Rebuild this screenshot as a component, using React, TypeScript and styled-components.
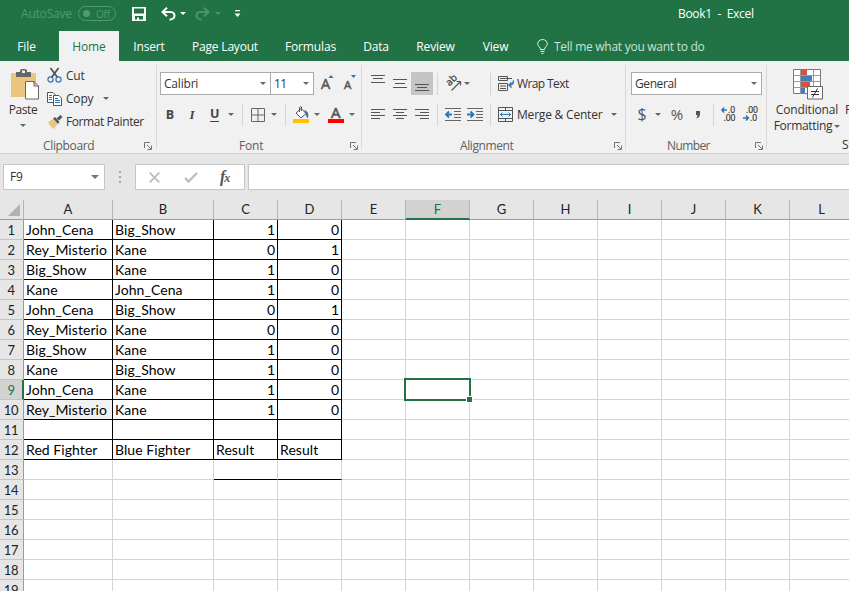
import React from 'react';
import styled, { createGlobalStyle, css } from 'styled-components';

const GREEN = '#217346';
const UI = "'Open Sans', 'Noto Sans', sans-serif";

const Global = createGlobalStyle`
  *, *::before, *::after { box-sizing: border-box; }
  body { margin: 0; overflow: hidden; background: #e6e6e6; font-family: ${UI}; }
`;

const Window = styled.div`
  width: 849px;
  height: 591px;
  overflow: hidden;
  display: flex;
  flex-direction: column;
  font-size: 12px;
  color: #333;
  background: #e6e6e6;
`;

/* Label with a fixed advance so neighbouring controls stay aligned */
const Label = styled.span<{ $w?: number; $ml?: number; $ls?: number; $size?: number }>`
  flex: none;
  white-space: nowrap;
  width: ${p => (p.$w ? `${p.$w}px` : 'auto')};
  margin-left: ${p => p.$ml ?? 0}px;
  letter-spacing: ${p => p.$ls ?? 0}px;
  font-size: ${p => p.$size ?? 12}px;
  line-height: 16px;
`;

const Icon = styled.svg<{ $ml?: number }>`
  flex: none;
  display: block;
  overflow: visible;
  margin-left: ${p => p.$ml ?? 0}px;
`;

const Arrow = styled.i<{ $ml?: number; $color?: string; $size?: number }>`
  flex: none;
  width: 0;
  height: 0;
  margin-left: ${p => p.$ml ?? 0}px;
  border: ${p => p.$size ?? 3}px solid transparent;
  border-top-color: ${p => p.$color ?? '#666'};
  border-bottom: 0;
`;

/* ---------- title bar ---------- */
const TitleBar = styled.header`
  flex: none;
  height: 31px;
  display: flex;
  align-items: center;
  padding: 0 0 4px 21px;
  background: ${GREEN};
  color: #fff;
`;
const AutoSave = styled(Label)` color: #4f9a70; `;
const Toggle = styled.span`
  flex: none;
  display: flex;
  align-items: center;
  width: 38px;
  height: 15px;
  margin-left: 7px;
  padding-left: 4px;
  border: 1px solid #4f9a70;
  border-radius: 8px;
  color: #4f9a70;
  &::before {
    content: '';
    width: 7px;
    height: 7px;
    border-radius: 50%;
    background: #4f9a70;
  }
`;

/* ---------- tabs ---------- */
const Tabs = styled.nav`
  flex: none;
  height: 30px;
  display: flex;
  align-items: center;
  background: ${GREEN};
  color: #fff;
`;
const Tab = styled.span<{ $w: number; $active?: boolean; $ls?: number }>`
  flex: none;
  width: ${p => p.$w}px;
  height: 30px;
  line-height: 31px;
  text-align: center;
  white-space: nowrap;
  letter-spacing: ${p => p.$ls ?? -0.15}px;
  ${p => p.$active && css`
    background: #f1f1f1;
    color: ${GREEN};
  `}
`;
const Tell = styled(Label)` color: #c9e3d4; padding-top: 1px; `;

/* ---------- ribbon ---------- */
const Ribbon = styled.div`
  flex: none;
  height: 93px;
  display: flex;
  background: #f1f1f1;
  border-bottom: 1px solid #d2d2d2;
`;
const Group = styled.section<{ $w: number }>`
  flex: none;
  width: ${p => p.$w}px;
  height: 92px;
  display: flex;
  flex-direction: column;
  background: linear-gradient(#d8d8d8, #d8d8d8) no-repeat right 4px / 1px 84px;
`;
const Tools = styled.div`
  height: 76px;
  padding-top: 11px;
  display: flex;
  flex-direction: column;
  gap: 8px;
`;
const Row = styled.div<{ $h?: number; $pl?: number }>`
  flex: none;
  height: ${p => p.$h ?? 23}px;
  padding-left: ${p => p.$pl ?? 0}px;
  display: flex;
  align-items: center;
`;
const Footer = styled.div<{ $pl: number; $pr?: number }>`
  height: 16px;
  display: flex;
  align-items: center;
  padding: 1px ${p => p.$pr ?? 4}px 0 ${p => p.$pl}px;
  color: #5e5e5e;
  & > svg { margin-left: auto; }
`;
const Divider = styled.i<{ $ml: number }>`
  flex: none;
  width: 1px;
  height: 22px;
  margin-left: ${p => p.$ml}px;
  background: #d4d4d4;
`;
const Combo = styled.div<{ $w: number; $joined?: boolean }>`
  flex: none;
  width: ${p => p.$w}px;
  height: 23px;
  margin-left: ${p => (p.$joined ? -1 : 0)}px;
  padding: 0 4px 0 3px;
  display: flex;
  align-items: center;
  justify-content: space-between;
  background: #fff;
  border: 1px solid #ababab;
`;
const Clip = styled.div`
  display: flex;
  height: 76px;
`;
const Big = styled.div<{ $w: number }>`
  flex: none;
  width: ${p => p.$w}px;
  height: 76px;
  padding-top: 8px;
  display: flex;
  flex-direction: column;
  align-items: center;
  & > svg { margin-bottom: 2px; }
`;
const Styles = styled.div`
  flex: none;
  width: 20px;
  margin-left: -5px;
  padding: 41px 0 0;
  display: flex;
  flex-direction: column;
  gap: 19px;
`;
const Stack = styled.div`
  display: flex;
  flex-direction: column;
  padding-top: 3px;
`;
const Letter = styled.b<{ $w: number; $ml: number; $italic?: boolean; $under?: boolean }>`
  flex: none;
  width: ${p => p.$w}px;
  margin-left: ${p => p.$ml}px;
  text-align: center;
  font-size: 12.5px;
  line-height: 14px;
  color: #444;
  ${p => p.$italic && css`
    font: italic bold 13px/14px 'Liberation Serif', serif;
  `}
  ${p => p.$under && css`
    height: 15px;
    border-bottom: 1px solid #444;
  `}
`;
const Pressed = styled.span`
  flex: none;
  width: 22px;
  height: 23px;
  margin-left: 4px;
  display: flex;
  align-items: center;
  justify-content: center;
  background: #c5c5c5;
`;
const Symbol = styled.span<{ $w: number; $ml: number; $size?: number }>`
  flex: none;
  width: ${p => p.$w}px;
  margin-left: ${p => p.$ml}px;
  font-size: ${p => p.$size ?? 16}px;
  line-height: 20px;
  height: 22px;
  text-align: center;
  color: #555;
`;

const Launcher = () => (
  <Icon width="8" height="8" viewBox="0 0 8 8" fill="none" stroke="#777">
    <path d="M.5 6V.5H6M3 3l4 4M7.500 3.500v4h-4" />
  </Icon>
);

const Lines = ({ rows, ml = 0, h = 15 }: { rows: number[][]; ml?: number; h?: number }) => (
  <Icon $ml={ml} width="14" height={h} viewBox={`0 0 14 ${h}`} stroke="#555">
    {rows.map(([y, a, b]) => <path key={y} d={`M${a} ${y + 0.5}H${b}`} />)}
  </Icon>
);

const Indent = ({ ml, right }: { ml: number; right?: boolean }) => (
  <Icon $ml={ml} width="16" height="15" viewBox="0 0 16 15" fill="none" stroke="#666">
    <path d="M0 1.500H16M9 4.500h7M9 7.500h7M9 10.500h7M0 13.500H16" />
    <path d={right ? 'M0 7.500h6M3.500 4.500L6.500 7.500 3.500 10.500' : 'M1 7.500h6M4 4.500L1 7.500l3 3'} stroke="#2e75b6" strokeWidth="1.800" />
  </Icon>
);

const Decimals = ({ ml, more }: { ml: number; more?: boolean }) => (
  <Icon $ml={ml} width="16" height="17" viewBox="0 0 16 17" fontSize="8.500" fontFamily="Open Sans" fill="#333">
    <text x={more ? 7 : 3} y="7" stroke="#333" strokeWidth=".2">{more ? '.0' : '.00'}</text>
    <text x={more ? 2.5 : 7} y="15" stroke="#333" strokeWidth=".2">{more ? '.00' : '.0'}</text>
    <path d={more ? 'M1 4h5M3.200 1.500L.8 4 3.200 6.500' : 'M0 12h5M3 9.500L5.400 12 3 14.500'} stroke="#2e75b6" strokeWidth="1.400" fill="none" />
  </Icon>
);

/* ---------- formula bar ---------- */
const FormulaBar = styled.div`
  flex: none;
  height: 46px;
  display: flex;
  align-items: flex-start;
  padding: 10px 0 0 3px;
`;
const Box = styled.div<{ $w: number; $ml?: number }>`
  flex: none;
  width: ${p => p.$w}px;
  height: 26px;
  margin-left: ${p => p.$ml ?? 0}px;
  display: flex;
  align-items: center;
  background: #fff;
  border: 1px solid #c6c6c6;
`;
const NameBox = styled(Box)`
  justify-content: space-between;
  padding: 0 5px 0 6px;
`;
const Dots = styled.span`
  flex: none;
  width: 2px;
  margin: 7px 0 0 14px;
  display: flex;
  flex-direction: column;
  gap: 3px;
  & > i { height: 2px; background: #a8a8a8; }
`;
const Fx = styled.span`
  margin-left: 22px;
  font: italic bold 16px/20px 'Liberation Serif', serif;
  color: #555;
  & > small { font-size: 12px; margin-left: -1px; }
`;

/* ---------- sheet ---------- */
const Sheet = styled.div`
  flex: none;
  display: grid;
  grid-template-columns: 24px 89px 101px repeat(10, 64px);
  grid-template-rows: 20px;
  grid-auto-rows: 20px;
  background: #fff;
`;
const Corner = styled.div`
  display: flex;
  align-items: flex-end;
  justify-content: flex-end;
  padding: 0 3px 3px 0;
  background: #e6e6e6;
  border-right: 1px solid #b5b5b5;
  border-bottom: 1px solid #9b9b9b;
`;
const ColHead = styled.div<{ $on?: boolean }>`
  height: 20px;
  text-align: center;
  font: 13px/19px Lato, ${UI};
  color: ${p => (p.$on ? GREEN : '#222')};
  background: ${p => (p.$on ? '#d2d2d2' : '#e6e6e6')};
  border-right: 1px solid #b5b5b5;
  border-bottom: ${p => (p.$on ? `2px solid ${GREEN}` : '1px solid #9b9b9b')};
`;
const RowHead = styled.div<{ $on?: boolean }>`
  text-align: center;
  font: 13px/21px Lato, ${UI};
  letter-spacing: -0.4px;
  height: 20px;
  padding-right: ${p => (p.$on ? 0 : 1)}px;
  color: ${p => (p.$on ? GREEN : '#222')};
  background: ${p => (p.$on ? '#d2d2d2' : '#e6e6e6')};
  border-right: ${p => (p.$on ? `2px solid ${GREEN}` : '1px solid #9b9b9b')};
  border-bottom: 1px solid #c4c4c4;
`;
const Cell = styled.div<{ $right?: boolean; $boxed?: boolean; $under?: boolean; $shade?: boolean }>`
  position: relative;
  height: 20px;
  padding: 0 2px;
  font-family: Lato, 'Open Sans', sans-serif;
  font-size: 14px;
  line-height: 20px;
  letter-spacing: ${p => (p.$right ? 0 : 0.06)}px;
  color: #000;
  white-space: nowrap;
  background: ${p => (p.$shade ? '#f1f1f1' : 'transparent')};
  text-align: ${p => (p.$right ? 'right' : 'left')};
  border-right: 1px solid ${p => (p.$boxed ? '#000' : '#d4d4d4')};
  border-bottom: 1px solid ${p => (p.$boxed || p.$under ? '#000' : '#d4d4d4')};
`;
const Selection = styled.div`
  position: absolute;
  z-index: 1;
  left: -2px;
  top: -2px;
  width: 67px;
  height: 23px;
  border: 2px solid ${GREEN};
  &::after {
    content: '';
    position: absolute;
    right: -4px;
    bottom: -4px;
    width: 7px;
    height: 7px;
    background: ${GREEN};
    border: 1px solid #fff;
  }
`;

const COLS = 'ABCDEFGHIJKL'.split('');
const DATA: string[][] = [
  ['John_Cena', 'Big_Show', '1', '0'],
  ['Rey_Misterio', 'Kane', '0', '1'],
  ['Big_Show', 'Kane', '1', '0'],
  ['Kane', 'John_Cena', '1', '0'],
  ['John_Cena', 'Big_Show', '0', '1'],
  ['Rey_Misterio', 'Kane', '0', '0'],
  ['Big_Show', 'Kane', '1', '0'],
  ['Kane', 'Big_Show', '1', '0'],
  ['John_Cena', 'Kane', '1', '0'],
  ['Rey_Misterio', 'Kane', '1', '0'],
  [],
  ['Red Fighter', 'Blue Fighter', 'Result', 'Result'],
];

export default function App() {
  return (
    <Window>
      <Global />
      <TitleBar>
        <AutoSave $w={50} $ls={-0.2}>AutoSave</AutoSave>
        <Toggle><Label $ml={6} $size={10} $ls={-0.2}>Off</Label></Toggle>
        <Icon $ml={16} width="14" height="14" viewBox="0 0 14 14">
          <path fill="#fff" fillRule="evenodd" d="M0 0H14V14H0ZM2 1.500V6.500H12V1.500ZM3 9V12.500H5V10.500H7V12.500H11V9Z" />
        </Icon>
        <Icon $ml={15} width="15" height="14" viewBox="0 0 15 14" fill="none" stroke="#fff" strokeWidth="2">
          <path d="M6 .8L1.500 5 6 9.200M2 5H9.500C15 5.500 15 12 8.500 12.800" />
        </Icon>
        <Arrow $ml={4} $color="#fff" />
        <Icon $ml={9} width="15" height="14" viewBox="0 0 15 14" fill="none" stroke="#4a946a" strokeWidth="2">
          <path d="M9 .8L13.500 5 9 9.200M13 5H5.500C0 5.500 0 12 6.500 12.800" />
        </Icon>
        <Arrow $ml={5} $color="#4a946a" />
        <Icon $ml={13} width="7" height="8" viewBox="0 0 7 8" fill="#fff">
          <path d="M1 0H6V1.300H1ZM.5 3.500H6.500L3.500 7Z" />
        </Icon>
        <Label $ml={437} $ls={-0.3}>Book1&nbsp; -&nbsp; Excel</Label>
      </TitleBar>

      <Tabs>
        <Tab $w={59}>File&nbsp;&nbsp;</Tab>
        <Tab $w={60} $active>Home</Tab>
        <Tab $w={60}>Insert</Tab>
        <Tab $w={92} $ls={-0.2}>Page Layout</Tab>
        <Tab $w={79}>Formulas</Tab>
        <Tab $w={52}>Data</Tab>
        <Tab $w={67}>Review</Tab>
        <Tab $w={53}>View</Tab>
        <Icon $ml={15} width="11" height="15" viewBox="0 0 11 15" fill="none" stroke="#e4f1e9">
          <path d="M3.500 10.500C3.500 8 .7 7.500 .7 4.800a4.800 4.300 0 0 1 9.600 0C10.300 7.500 7.500 8 7.500 10.500ZM3.500 12.500H7.500M4.500 14.500H6.500" />
        </Icon>
        <Tell $ml={6} $ls={-0.27}>Tell me what you want to do</Tell>
      </Tabs>

      <Ribbon>
        <Group $w={157}>
          <Clip>
            <Big $w={46}>
              <Icon $ml={3} width="28" height="31" viewBox="0 0 28 31">
                <path fill="#ebc57c" d="M0 4H25V28H0Z" />
                <path fill="#666" d="M5 3H9V1.500Q9 0 11 0H14Q16 0 16 1.500V3H20V8H5Z" />
                <path fill="#f1f1f1" d="M11 1.500H14V4H11Z" />
                <path fill="#fff" stroke="#666" d="M14.500 12.500H23L27.500 17V30H14.500ZM23 12.500V17H27.500" />
              </Icon>
              <Label $ls={-0.4}>Paste</Label>
              <Row $h={14}><Arrow /></Row>
            </Big>
            <Stack>
              <Row>
                <Icon $ml={1} width="16" height="15" viewBox="0 0 16 15" fill="none">
                  <path d="M3.500 0L10.500 9.500M11.500 0L4.500 9.500" stroke="#555" strokeWidth="1.800" />
                  <circle cx="3.500" cy="11.500" r="2.600" stroke="#2e75b6" strokeWidth="1.200" />
                  <circle cx="11.500" cy="11.500" r="2.600" stroke="#2e75b6" strokeWidth="1.200" />
                </Icon>
                <Label $ml={3} $ls={-0.2}>Cut</Label>
              </Row>
              <Row>
                <Icon $ml={1} width="16" height="14" viewBox="0 0 16 14" fill="#fff" stroke="#555">
                  <path d="M.5 .5H6L8.500 3V10.500H.5Z" />
                  <path d="M2 3.500H5M2 5.500H5M2 7.500H5" stroke="#2e75b6" />
                  <path d="M6.500 3.500H12L14.500 6V13.500H6.500Z" />
                  <path d="M8 6.500H11M8 8.500H13M8 10.500H13" stroke="#2e75b6" />
                </Icon>
                <Label $ml={3} $w={28} $ls={-0.2}>Copy</Label>
                <Arrow $ml={9} />
              </Row>
              <Row>
                <Icon $ml={2} width="15" height="14" viewBox="0 0 15 14">
                  <path fill="#ebc57c" d="M0 7L5 4 9.500 9 6 14Q2 12 0 7Z" />
                  <path fill="#555" d="M5 3.500L7 2 11.500 7 10 9ZM8.500 3.500L12.500 0 14.500 2 11 5.500Z" />
                </Icon>
                <Label $ml={3} $ls={-0.42}>Format Painter</Label>
              </Row>
            </Stack>
          </Clip>
          <Footer $pl={43} $pr={5}><Label $ls={-0.35}>Clipboard</Label><Launcher /></Footer>
        </Group>

        <Group $w={205}>
          <Tools>
            <Row $pl={3}>
              <Combo $w={111}><Label $ls={-0.2}>Calibri</Label><Arrow /></Combo>
              <Combo $w={44} $joined><Label $ls={-0.5}>11</Label><Arrow /></Combo>
              <Icon $ml={7} width="13" height="18" viewBox="0 0 13 18">
                <text x="0" y="14" fontSize="14.500" fontFamily="Open Sans" fill="#555" stroke="#555" strokeWidth=".5">A</text>
                <path fill="#2e75b6" d="M7.500 3L10 0 12.500 3Z" />
              </Icon>
              <Icon $ml={10} width="13" height="18" viewBox="0 0 13 18">
                <text x="0" y="14" fontSize="11.500" fontFamily="Open Sans" fill="#555" stroke="#555" strokeWidth=".5">A</text>
                <path fill="#2e75b6" d="M7 0H12L9.500 3Z" />
              </Icon>
            </Row>
            <Row>
              <Letter $w={10} $ml={8}>B</Letter>
              <Letter $w={8} $ml={13} $italic>I</Letter>
              <Letter $w={9} $ml={14} $under>U</Letter>
              <Arrow $ml={9} />
              <Divider $ml={8} />
              <Icon $ml={8} width="14" height="14" viewBox="0 0 14 14" fill="none" stroke="#666">
                <path d="M.5 .5H13.500V13.500H.5ZM7 .5V13.500M.5 7H13.500" />
              </Icon>
              <Arrow $ml={6} />
              <Divider $ml={8} />
              <Icon $ml={7} width="17" height="17" viewBox="0 0 17 17">
                <path d="M3 7L8 2.500 13 7.500 8 12ZM6.500 6V1.500Q7 0 8.500 1V5" fill="#fff" stroke="#555" />
                <path d="M11 4Q16.500 5 15 12 13 11 12.500 8Z" fill="#3d6f9e" />
                <path d="M0 13H16V17H0Z" fill="#ffc000" />
              </Icon>
              <Arrow $ml={4} />
              <Icon $ml={8} width="17" height="17" viewBox="0 0 17 17">
                <text x="3" y="12" fontSize="15" fontFamily="Open Sans" fill="#555" stroke="#555" strokeWidth=".6">A</text>
                <path d="M0 13H16V17H0Z" fill="#f00" />
              </Icon>
              <Arrow $ml={4} />
            </Row>
          </Tools>
          <Footer $pl={82} $pr={4}><Label $ls={-0.2}>Font</Label><Launcher /></Footer>
        </Group>

        <Group $w={264}>
          <Tools>
            <Row $pl={9}>
              <Lines rows={[[1, 0, 14], [4, 2, 12], [8, 0, 14]]} h={19} />
              <Lines ml={8} rows={[[3, 0, 14], [7, 2, 12], [11, 0, 14]]} />
              <Pressed><Lines rows={[[12, 0, 14], [15, 2, 12], [18, 0, 14]]} h={23} /></Pressed>
              <Divider $ml={4} />
              <Icon $ml={7} width="17" height="17" viewBox="0 0 17 17" fill="none" stroke="#555">
                <text x="0" y="0" transform="translate(4.500 11.500) rotate(-45)" fontSize="10" fontFamily="Open Sans" fill="#444" stroke="#444" strokeWidth=".3">ab</text>
                <path d="M6.500 15.500L15 7M11.500 6.500H15.500V10.500" strokeWidth="1.200" />
              </Icon>
              <Arrow $ml={2} />
              <Divider $ml={20} />
              <Icon $ml={7} width="17" height="16" viewBox="0 0 17 16" fill="none" stroke="#555">
                <path d="M.5 .5H9.500V4.500H.5ZM.5 7.500H9.500V14.500H.5ZM2 10H8M2 12.500H8M2 2.500H14" />
                <path d="M15.300 4.500V6Q15 9 11.500 9M13.500 6.500L11 9 13.500 11.500" stroke="#2e75b6" strokeWidth="1.500" />
              </Icon>
              <Label $ml={2} $ls={-0.6}>Wrap Text</Label>
            </Row>
            <Row $pl={9}>
              <Lines rows={[[2, 0, 14], [5, 0, 9], [8, 0, 14], [11, 0, 9]]} />
              <Lines ml={8} rows={[[2, 0, 14], [5, 3, 11], [8, 0, 14], [11, 3, 11]]} />
              <Lines ml={8} rows={[[2, 0, 14], [5, 5, 14], [8, 0, 14], [11, 5, 14]]} />
              <Divider $ml={8} />
              <Indent ml={7} />
              <Indent ml={6} right />
              <Divider $ml={7} />
              <Icon $ml={7} width="16" height="15" viewBox="0 0 16 15" fill="none" stroke="#555">
                <path d="M.5 .5H14.500V14.500H.5ZM.5 3.500H14.500M.5 11.500H14.500M7.500 .5V3.500M7.500 11.500V14.500" />
                <path d="M2 7.500H13M4.500 5.500L2.500 7.500 4.500 9.500M10.500 5.500L12.500 7.500 10.500 9.500" stroke="#2e75b6" />
              </Icon>
              <Label $ml={3} $w={91} $ls={-0.2}>Merge &amp; Center</Label>
              <Arrow $ml={3} />
            </Row>
          </Tools>
          <Footer $pl={98} $pr={4}><Label $ls={-0.4}>Alignment</Label><Launcher /></Footer>
        </Group>

        <Group $w={141}>
          <Tools>
            <Row $pl={5}>
              <Combo $w={131}><Label $ls={-0.4}>General</Label><Arrow /></Combo>
            </Row>
            <Row>
              <Symbol $w={10} $ml={11}>$</Symbol>
              <Arrow $ml={8} />
              <Symbol $w={14} $ml={9} $size={15}>%</Symbol>
              <Icon $ml={11} width="6" height="9" viewBox="0 0 6 9"><path d="M1 1H5V4Q5 7 1.500 8.500L2.500 5H1Z" fill="#555" /></Icon>
              <Divider $ml={12} />
              <Decimals ml={7} more />
              <Decimals ml={6} />
            </Row>
          </Tools>
          <Footer $pl={41} $pr={4}><Label $ls={-0.6}>Number</Label><Launcher /></Footer>
        </Group>

        <Big $w={80}>
          <Icon $ml={2} width="30" height="31" viewBox="0 0 30 31" fill="#fff" stroke="#777">
            <path d="M.5 .5H27.500V24.500H.5Z" />
            <path d="M8 1H14V6H8ZM8 13H17V18H8Z" fill="#d9503f" stroke="none" />
            <path d="M8 7H19V12H8ZM8 19H12V24H8Z" fill="#3f7fb8" stroke="none" />
            <path d="M.5 6.500H27.500M.5 12.500H27.500M.5 18.500H27.500M7.500 .5V24.500M20.500 .5V24.500" fill="none" stroke="#999" />
            <path d="M14.500 17.500H29.500V30H14.500Z" stroke="#666" />
            <path d="M18 22.500H26M18 25.500H26M24.500 19.500L19.500 28.500" stroke="#333" fill="none" />
          </Icon>
          <Label $ls={-0.15}>Conditional</Label>
          <Row $h={16}><Label $ls={-0.3}>Formatting</Label><Arrow $ml={2} /></Row>
        </Big>
        <Styles>
          <Label $ml={3}>F</Label>
          <Label>St</Label>
        </Styles>
      </Ribbon>

      <FormulaBar>
        <NameBox $w={102}><Label $ls={-0.2}>F9</Label><Arrow $size={4} $color="#777" /></NameBox>
        <Dots><i /><i /><i /></Dots>
        <Box $w={110} $ml={14}>
          <Icon $ml={13} width="11" height="11" viewBox="0 0 11 11" stroke="#bdbdbd" strokeWidth="1.800"><path d="M.7 .7L10.300 10.300M10.300 .7L.7 10.300" /></Icon>
          <Icon $ml={24} width="14" height="11" viewBox="0 0 14 11" stroke="#bdbdbd" strokeWidth="2.400" fill="none"><path d="M1 6L4.500 9.500 13 1" /></Icon>
          <Fx>f<small>x</small></Fx>
        </Box>
        <Box $w={620} $ml={3} />
      </FormulaBar>

      <Sheet>
        <Corner>
          <Icon width="12" height="12" viewBox="0 0 12 12"><path d="M12 0V12H0Z" fill="#b2b2b2" /></Icon>
        </Corner>
        {COLS.map(c => <ColHead key={c} $on={c === 'F'}>{c}</ColHead>)}
        {Array.from({ length: 19 }, (_, r) => (
          <React.Fragment key={r}>
            <RowHead $on={r === 8}>{r + 1}</RowHead>
            {COLS.map((c, i) => (
              <Cell
                key={c}
                $boxed={r < 12 && i < 4}
                $under={r === 12 && (i === 2 || i === 3)}
                $right={r < 10 && i > 1}
                $shade={r === 9 && i === 0}
              >
                {DATA[r]?.[i]}
                {r === 8 && c === 'F' && <Selection />}
              </Cell>
            ))}
          </React.Fragment>
        ))}
      </Sheet>
    </Window>
  );
}
